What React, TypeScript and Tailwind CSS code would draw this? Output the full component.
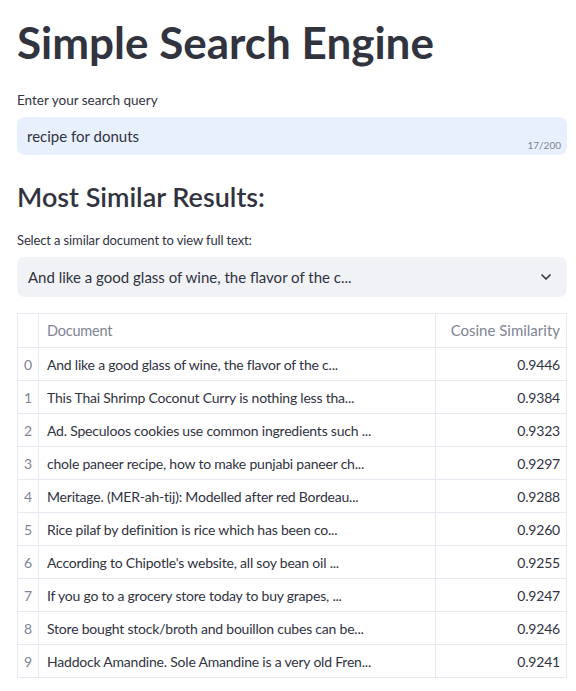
import { ChevronDown } from 'lucide-react';

const rows = [
    { doc: 'And like a good glass of wine, the flavor of the c...', score: '0.9446' },
    { doc: 'This Thai Shrimp Coconut Curry is nothing less tha...', score: '0.9384' },
    { doc: 'Ad. Speculoos cookies use common ingredients such ...', score: '0.9323' },
    { doc: 'chole paneer recipe, how to make punjabi paneer ch...', score: '0.9297' },
    { doc: 'Meritage. (MER-ah-tij): Modelled after red Bordeau...', score: '0.9288' },
    { doc: 'Rice pilaf by definition is rice which has been co...', score: '0.9260' },
    { doc: "According to Chipotle's website, all soy bean oil ...", score: '0.9255' },
    { doc: 'If you go to a grocery store today to buy grapes, ...', score: '0.9247' },
    { doc: 'Store bought stock/broth and bouillon cubes can be...', score: '0.9246' },
    { doc: 'Haddock Amandine. Sole Amandine is a very old Fren...', score: '0.9241' },
];

const App = () => {
    return (
        <div className="min-h-[691px] bg-white font-['Lato',sans-serif] text-[#31333f]">
            <div className="w-[567px] pl-[17px] pt-[16px]">
                {/* Title */}
                <h1 className="text-[44px] font-bold leading-[1.2] text-[#31333f]">
                    Simple Search Engine
                </h1>

                {/* Search input */}
                <div className="mt-[22px]">
                    <label className="block text-[13.5px] leading-[18px] text-[#31333f]">
                        Enter your search query
                    </label>
                    <div className="relative mt-[8px] flex h-[38px] items-center rounded-lg bg-[#e8f0fe] px-[10px]">
                        <span className="text-[15px]">recipe for donuts</span>
                        <span className="absolute bottom-[2px] right-[6px] text-[10px] text-[#808495]">
                            17/200
                        </span>
                    </div>
                </div>

                {/* Results */}
                <h2 className="mt-[26px] text-[27px] font-semibold leading-[1.2]">
                    Most Similar Results:
                </h2>

                <div className="mt-[18px]">
                    <label className="block text-[13px] tracking-[-0.01em] leading-[18px]">
                        Select a similar document to view full text:
                    </label>
                    <div className="mt-[8px] flex h-[40px] items-center justify-between rounded-lg bg-[#f0f2f6] pl-[11px] pr-[13px]">
                        <span className="text-[15px]">And like a good glass of wine, the flavor of the c...</span>
                        <ChevronDown size={16} strokeWidth={2.5} className="text-[#31333f]" />
                    </div>
                </div>

                {/* Table */}
                <div className="mt-[16px] border border-[#e6e9ef] text-[14px] tracking-[-0.015em]">
                    <div className="grid h-[33px] grid-cols-[21px_1fr_130px] items-stretch text-[#808495]">
                        <div className="border-r border-[#e6e9ef]" />
                        <div className="flex items-center border-r border-[#e6e9ef] px-[8px] text-[14.5px]">Document</div>
                        <div className="flex items-center justify-end px-[6px] text-[15px] tracking-normal">Cosine Similarity</div>
                    </div>
                    {rows.map((row, i) => (
                        <div
                            key={i}
                            className="grid h-[33px] grid-cols-[21px_1fr_130px] items-stretch border-t border-[#e6e9ef]"
                        >
                            <div className="flex items-center justify-center border-r border-[#e6e9ef] text-[#808495]">
                                {i}
                            </div>
                            <div className="flex items-center border-r border-[#e6e9ef] px-[8px]">{row.doc}</div>
                            <div className="flex items-center justify-end px-[6px]">{row.score}</div>
                        </div>
                    ))}
                </div>
            </div>
        </div>
    );
};

export default App;
